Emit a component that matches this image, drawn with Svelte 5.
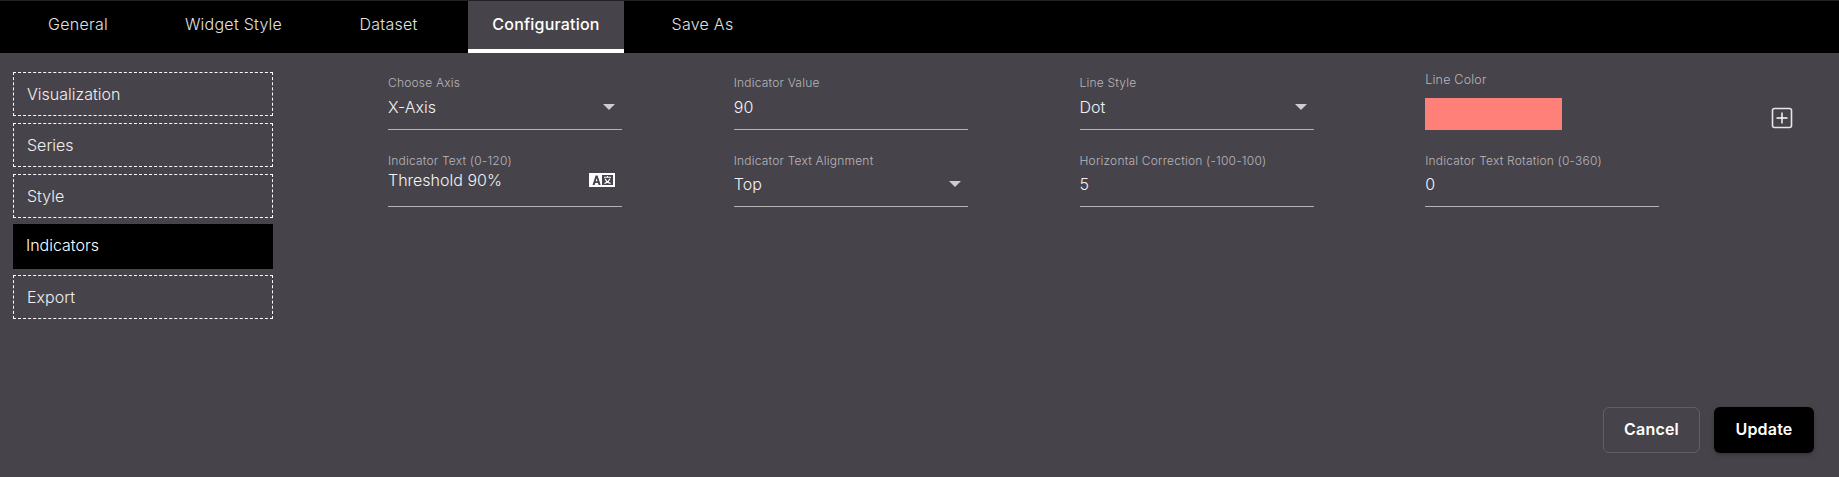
<script>
	const tabs = ["General", "Widget Style", "Dataset", "Configuration", "Save As"];
	const activeTab = "Configuration";
	const menu = ["Visualization", "Series", "Style", "Indicators", "Export"];
	const activeItem = "Indicators";

	const row1 = [
		{ label: "Choose Axis", value: "X-Axis", select: true },
		{ label: "Indicator Value", value: "90" },
		{ label: "Line Style", value: "Dot", select: true },
	];
	const row2 = [
		{ label: "Indicator Text (0-120)", value: "Threshold 90%", translate: true },
		{ label: "Indicator Text Alignment", value: "Top", select: true },
		{ label: "Horizontal Correction (-100-100)", value: "5" },
		{ label: "Indicator Text Rotation (0-360)", value: "0" },
	];
</script>

{#snippet field(f, lower)}
	<div class="field" class:lower>
		<div class="field-label">{f.label}</div>
		<div class="field-value" class:raised={f.translate}>
			<span>{f.value}</span>
			{#if f.select}
				<span class="caret"></span>
			{/if}
			{#if f.translate}
				<svg class="translate" width="26" height="14" viewBox="0 0 26 14">
					<rect width="26" height="14" fill="#fff" />
					<rect x="13" y="2" width="11" height="10" fill="#47434a" />
					<path d="M3.5 12 6.6 2.5h2L11.7 12H9.6L9 10H6.2l-.6 2zM6.7 8.3h1.8L7.6 5.2z" fill="#47434a" />
					<path d="M15 4.2h7M18.5 3v1.2M16 5.6c.8 2 2.8 4 5.6 5M21 5.6c-.8 2-2.8 4-5.6 5" stroke="#fff" stroke-width="1.1" fill="none" />
				</svg>
			{/if}
		</div>
	</div>
{/snippet}

<div class="page">
	<nav class="tabs">
		{#each tabs as tab}
			<div class="tab" class:active={tab === activeTab}>{tab}</div>
		{/each}
	</nav>

	<div class="content">
		<aside class="menu">
			{#each menu as item}
				<div class="menu-item" class:active={item === activeItem}>{item}</div>
			{/each}
		</aside>

		<section class="fields">
			{#each row1 as f}
				{@render field(f, false)}
			{/each}

			<div class="field color-field">
				<div class="field-label">Line Color</div>
				<div class="swatch"></div>
			</div>

			<button class="add" aria-label="Add indicator">
				<svg width="22" height="22" viewBox="0 0 22 22">
					<rect x="1.5" y="1.5" width="19" height="19" rx="2" fill="none" stroke="#e6e6e6" stroke-width="1.6" />
					<path d="M11 5.5v11M5.5 11h11" stroke="#fff" stroke-width="1.4" />
				</svg>
			</button>

			{#each row2 as f}
				{@render field(f, true)}
			{/each}
		</section>
	</div>

	<footer class="actions">
		<button class="btn cancel">Cancel</button>
		<button class="btn update">Update</button>
	</footer>
</div>

<style>
	:global(body) {
		margin: 0;
		background: #47434a;
	}

	.page {
		height: 477px;
		display: flex;
		flex-direction: column;
		background: #47434a;
		font-family: Inter, "Noto Sans", sans-serif;
		color: #fff;
	}

	.tabs {
		display: grid;
		grid-template-columns: 112px 151px 111px 156px 109px;
		column-gap: 24px;
		height: 52px;
		padding-left: 22px;
		background: #000;
		border-top: 1px solid #222;
		flex-shrink: 0;
	}

	.tab {
		display: flex;
		align-items: center;
		justify-content: center;
		padding-bottom: 6px;
		font-size: 16px;
		font-weight: 300;
		letter-spacing: 0.25px;
		color: #e2e2e2;
	}

	.tab.active {
		background: #47434a;
		border-bottom: 4px solid #fff;
		color: #fff;
		font-weight: 500;
		letter-spacing: 0.2px;
		padding-bottom: 3px;
		box-sizing: border-box;
	}

	.content {
		flex: 1;
		display: flex;
		padding: 19px 0 0 13px;
	}

	.menu {
		flex: none;
		width: 260px;
		display: flex;
		flex-direction: column;
		gap: 7px;
	}

	.menu-item {
		height: 44px;
		display: flex;
		align-items: center;
		padding-left: 13px;
		box-sizing: border-box;
		border: 1px dashed #fff;
		font-size: 16px;
		font-weight: 300;
		color: #f0f0f0;
	}

	.menu-item.active {
		height: 45px;
		margin: -1px 0;
		padding: 0 0 4px 13px;
		background: #000;
		border: 0;
		color: #fff;
	}

	.fields {
		flex: none;
		margin-left: 115px;
		padding-top: 2px;
		display: grid;
		grid-template-columns: repeat(4, 234px) 22px;
		grid-auto-rows: 56px;
		column-gap: 111.75px;
		row-gap: 21px;
		align-content: start;
	}

	.field {
		display: flex;
		flex-direction: column;
		box-sizing: border-box;
		border-bottom: 1px solid #b5b2b6;
	}

	.field-label {
		height: 18px;
		line-height: 18px;
		font-size: 12px;
		font-weight: 300;
		color: #b9b6ba;
		letter-spacing: 0.2px;
		white-space: nowrap;
	}

	.field.lower .field-label {
		margin-top: 1px;
		margin-bottom: -1px;
	}

	.field-value {
		display: flex;
		align-items: center;
		justify-content: space-between;
		height: 30px;
		font-size: 16px;
		font-weight: 300;
		color: #f2f2f2;
	}

	.field-value.raised {
		margin-top: -4px;
	}

	.caret {
		width: 0;
		height: 0;
		margin-right: 7px;
		border-left: 6.5px solid transparent;
		border-right: 6.5px solid transparent;
		border-top: 6.5px solid #cfcdd0;
	}

	.translate {
		margin-right: 7px;
	}

	.color-field {
		border-bottom: 0;
	}

	.color-field .field-label {
		margin-top: -3px;
		height: 18px;
		font-size: 12.5px;
		font-weight: 300;
	}

	.swatch {
		width: 137px;
		height: 33px;
		margin-top: 9px;
		background: #ff8078;
	}

	.add {
		align-self: end;
		justify-self: start;
		padding: 0;
		margin-bottom: 1px;
		width: 22px;
		height: 22px;
		background: none;
		border: 0;
		display: block;
	}

	.actions {
		display: flex;
		justify-content: flex-end;
		gap: 14px;
		padding: 0 25px 24px 0;
	}

	.btn {
		height: 46px;
		padding: 0 0 2px;
		border-radius: 6px;
		font-family: inherit;
		font-size: 16px;
		font-weight: 600;
		letter-spacing: 0.2px;
		color: #fff;
	}

	.cancel {
		width: 97px;
		background: transparent;
		border: 1px solid #635f66;
	}

	.update {
		width: 100px;
		background: #000;
		border: 0;
		box-shadow: 0 2px 4px rgba(0, 0, 0, 0.25);
	}
</style>
